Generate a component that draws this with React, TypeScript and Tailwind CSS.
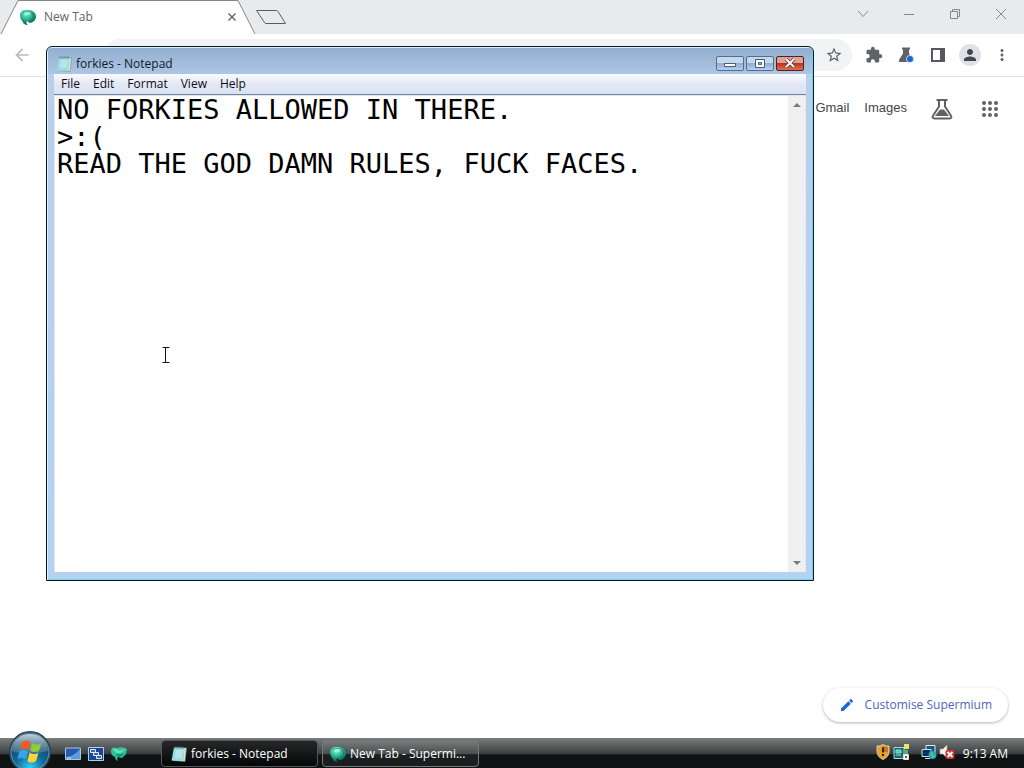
import { useState } from "react";
import type { ReactNode } from "react";
import { MdArrowBack, MdEdit, MdExtension, MdMoreVert, MdPerson, MdStarBorder } from "react-icons/md";

function Supermium({ className }: { className: string }) {
  return (
    <svg viewBox="0 0 16 16" className={className} aria-hidden="true">
      <defs>
        <radialGradient id="gem" cx="40%" cy="25%" r="75%">
          <stop offset="0" stopColor="#8cf3d5" />
          <stop offset="0.5" stopColor="#2bb594" />
          <stop offset="1" stopColor="#075a55" />
        </radialGradient>
      </defs>
      <path d="M0 5C1 1 5 0 9 1c4 0 7 3 7 6.500C16 11 13 14 9.500 14L7 12l-.5 2.500L8 16c-3 0-5-1.500-5.500-3.500C.5 11 0 8 0 5Z" fill="url(#gem)" />
      <path d="M3 4c3-2 8-2 10 1 1.500 3-.5 6-4 7" fill="none" stroke="#0a6b66" strokeWidth="1" opacity=".6" />
      <path d="M4 4c2-2 6-1.500 7 0-1 2-5 3-7 2Z" fill="#b1fae5" opacity=".65" />
    </svg>
  );
}

function SupermiumPinned() {
  return (
    <svg viewBox="0 0 16 16" className="size-4" aria-hidden="true">
      <path d="M0 5C0 1 3 1 6 2c3-1.500 7-1 10 1l-1 5-4 4-4-1-1 2 1 2c-2-1-3-2-3-4C1 10 0 8 0 5Z" fill="#2cc197" />
      <path d="M1.500 3c2-1 5 0 7 1.500 2-1 4-1.500 6-1.500l-4 4H5Z" fill="#78dfbf" opacity=".8" />
      <path d="M5 8c3 1 6 0 8-1-1 3-4 4.500-7 3.500Z" fill="#139273" />
    </svg>
  );
}

function NoteIcon({ className }: { className: string }) {
  return (
    <svg viewBox="0 0 16 16" className={className} aria-hidden="true">
      <path d="m4 1.500 11.500.5-1.500 13.500-12-1Z" fill="#eee9cb" stroke="#77896f" strokeWidth=".6" />
      <path d="m3 1.500 11 .5-1.500 13L.5 14.500Z" fill="#9bdce0" />
      <path d="M5 5h7M4.500 7h7M4 9h7M4 11h7" stroke="#d9f6f5" strokeWidth=".8" />
      <path d="M4 .5v2m2-2v2m2-2v2m2-2v2m2-2v2" stroke="#41717c" strokeWidth=".9" />
    </svg>
  );
}

function FlaskSmall() {
  return (
    <svg viewBox="0 0 18 18" className="size-[18px]" aria-hidden="true">
      <path d="M5 1.500h8v2h-1v4L16 14c.7 1.200 0 2-1 2H3c-1 0-1.700-.8-1-2l4-6.500v-4H5Z" fill="#5f6368" />
      <circle cx="13" cy="13" r="3.600" fill="#1a66d8" stroke="#fff" strokeWidth=".7" />
    </svg>
  );
}

function FlaskLarge() {
  return (
    <svg viewBox="0 0 24 24" className="size-6" aria-hidden="true" fill="none" stroke="#5f6368" strokeWidth="2">
      <path d="M6.500 3h11M9 3v6.500L3.500 18C2 20 2.500 21.500 4.500 21.500h15c2 0 2.500-1.500 1-3.500L15 9.500V3" />
      <path d="M10 12.500h4l5 6.500H5Z" fill="#5f6368" stroke="none" />
    </svg>
  );
}

function AppsGrid() {
  const spots = [6, 12, 18];
  return (
    <svg viewBox="0 0 24 24" className="size-6" fill="currentColor" aria-hidden="true">
      {spots.map((y) => spots.map((x) => <circle key={`${x}-${y}`} cx={x} cy={y} r="2" />))}
    </svg>
  );
}

function CaptionButton({ label, children }: { label: string; children: ReactNode }) {
  return (
    <button aria-label={label} className="flex h-7 w-[46px] items-center justify-center">
      <svg viewBox="0 0 12 12" className="size-3" fill="none" stroke="#85878c" strokeWidth="1">{children}</svg>
    </button>
  );
}

function ToolButton({ label, children }: { label: string; children: ReactNode }) {
  return <button aria-label={label} className="flex size-8 items-center justify-center text-[#5f6368]">{children}</button>;
}

function Browser() {
  return (
    <main className="flex flex-1 flex-col bg-white">
      <header className="flex h-[34px] items-start bg-[#e8eaed]">
        <div className="relative flex h-[34px] w-[256px] shrink-0 items-center pl-5 pr-4">
          <svg viewBox="0 0 256 34" className="absolute inset-0 size-full" aria-hidden="true">
            <path d="M1 34 18 .5h220L255 34" fill="#fff" stroke="#85878b" />
          </svg>
          <Supermium className="relative size-4" />
          <span className="relative ml-2 flex-1 text-[12px] leading-4 text-[#606369]">New Tab</span>
          <button aria-label="Close tab" className="relative flex size-4 items-center justify-center">
            <svg viewBox="0 0 8 8" className="size-2" stroke="#5f6368" strokeWidth="1.400"><path d="m.5.5 7 7m0-7-7 7" /></svg>
          </button>
        </div>
        <button aria-label="New tab" className="flex h-[34px] items-center">
          <svg viewBox="0 0 32 16" className="h-4 w-8" fill="none" stroke="#5b5d60"><path d="M.5 1.500h20q1 0 1.500 1l7.500 12H10q-1 0-1.500-1Z" /></svg>
        </button>
        <div className="ml-auto flex">
          <CaptionButton label="Search tabs"><path d="m1 3 5 5.500L11 3" /></CaptionButton>
          <CaptionButton label="Minimize"><path d="M1 6.500h10" /></CaptionButton>
          <CaptionButton label="Restore"><path d="M1.500 3.500h7v7h-7ZM3.500 3V1.500h7v7H9" /></CaptionButton>
          <CaptionButton label="Close"><path d="m1 1 10 10m0-10L1 11" /></CaptionButton>
        </div>
      </header>
      <nav className="flex h-[43px] items-center border-b border-[#dfe1e5] pl-3 pr-1.5">
        <button aria-label="Back" className="text-[#babcbe]"><MdArrowBack size={20} /></button>
        <div className="ml-[72px] mr-1.5 flex h-8 flex-1 items-center justify-end rounded-full bg-[#f1f3f4] pr-[9px]">
          <button aria-label="Bookmark" className="text-[#5f6368]"><MdStarBorder size={18} /></button>
        </div>
        <ToolButton label="Extensions"><MdExtension size={18} /></ToolButton>
        <ToolButton label="Experiments"><FlaskSmall /></ToolButton>
        <ToolButton label="Side panel">
          <svg viewBox="0 0 14 14" className="size-3.5"><path d="M0 0h14v14H0Z" fill="#55585c" /><path d="M2 2h7v10H2Z" fill="#fff" /></svg>
        </ToolButton>
        <ToolButton label="Profile"><span className="flex size-[22px] items-center justify-center rounded-full bg-[#dee1e6] text-[#42474e]"><MdPerson size={18} /></span></ToolButton>
        <ToolButton label="Menu"><MdMoreVert size={18} /></ToolButton>
      </nav>
      <div className="flex h-16 items-center justify-end pr-[22px] font-['Liberation_Sans',sans-serif] text-[13px] text-[#434548]">
        <a href="#gmail" className="mr-[15px] pb-0.5">Gmail</a>
        <a href="#images" className="mr-[23px] pb-0.5">Images</a>
        <button aria-label="Search labs" className="mr-6"><FlaskLarge /></button>
        <button aria-label="Google apps" className="text-[#5f6368]"><AppsGrid /></button>
      </div>
      <div className="mt-auto flex justify-end pb-4 pr-4">
        <button className="flex h-[34px] items-center gap-2.5 rounded-full bg-white px-4 text-[12px] text-[#4c66b9] shadow-[0_1px_3px_rgba(0,0,0,0.3)]">
          <MdEdit size={16} className="text-[#1967d2]" />Customise Supermium
        </button>
      </div>
    </main>
  );
}

function Notepad() {
  const [text, setText] = useState("NO FORKIES ALLOWED IN THERE.\n>:(\nREAD THE GOD DAMN RULES, FUCK FACES.");
  return (
    <section aria-label="forkies - Notepad" className="absolute left-[46px] top-[46px] flex h-[535px] w-[768px] flex-col rounded-t-md border border-[#061a20] bg-linear-to-b from-[#b9cfe9] to-[#b5d2f2] px-[7px] pb-2 text-[#111a2c] shadow-[inset_1px_1px_0_#d8f2fb,inset_-1px_-1px_0_#69d7ef]">
      <header className="-mx-1.5 mt-px flex h-[26px] shrink-0 items-center rounded-t bg-linear-to-b from-[#91afd1] via-[#a1bad9] to-[#acc6e5] px-2 pt-1.5">
        <NoteIcon className="mr-1 size-4" />
        <h1 className="flex-1 text-[12px] leading-4">forkies - Notepad</h1>
        <div className="flex gap-0.5 pb-0.5">
          <button aria-label="Minimize" className="flex h-[15px] w-7 items-center justify-center rounded-xs border border-[#576d8b] bg-linear-to-b from-[#c5d9ed] from-45% via-[#91add0] via-50% to-[#b3d0ec]">
            <svg viewBox="0 0 12 9" className="h-[9px] w-3"><path d="M.5 4.500h11v3H.5Z" fill="#fff" stroke="#485b78" /></svg>
          </button>
          <button aria-label="Maximize" className="flex h-[15px] w-7 items-center justify-center rounded-xs border border-[#576d8b] bg-linear-to-b from-[#c5d9ed] from-45% via-[#91add0] via-50% to-[#b3d0ec]">
            <svg viewBox="0 0 12 9" className="h-[9px] w-3"><path d="M1.500.5h9v8h-9Z" fill="#fff" stroke="#485b78" /><path d="M4.500 3.500h3v2h-3Z" fill="#9bb5d4" stroke="#485b78" /></svg>
          </button>
          <button aria-label="Close" className="flex h-[15px] w-7 items-center justify-center rounded-xs border border-[#551e20] bg-linear-to-b from-[#dfa096] from-45% via-[#b93620] via-50% to-[#da704d]">
            <svg viewBox="0 0 12 10" className="h-2.5 w-3"><path d="m2 1 8 8m0-8L2 9" stroke="#5c3036" strokeWidth="3.500" /><path d="m2 1 8 8m0-8L2 9" stroke="#fff" strokeWidth="2" /></svg>
          </button>
        </div>
      </header>
      <nav className="flex h-[21px] shrink-0 items-center gap-[13px] border-b border-[#74839f] bg-linear-to-b from-[#fafbff] via-[#e4e8f5] to-[#d9e2f1] pl-[7px] text-[12px] leading-4 text-[#0d0d14]">
        <button>File</button><button>Edit</button><button>Format</button><button>View</button><button>Help</button>
      </nav>
      <div className="flex min-h-0 flex-1 border-x border-t border-[#dce9f5] bg-white">
        <textarea aria-label="Document" spellCheck={false} value={text} onChange={(e) => setText(e.target.value)} className="min-w-0 flex-1 resize-none overflow-hidden bg-white px-0.5 font-['DejaVu_Sans_Mono',monospace] text-[27px] leading-[27px] text-black outline-none" />
        <div className="flex w-[17px] flex-col items-center justify-between bg-[#eff0f1] py-[7px]">
          <button aria-label="Scroll up" className="flex"><svg viewBox="0 0 8 4" className="h-1 w-2"><path d="m4 0 4 4H0Z" fill="#777b80" /></svg></button>
          <button aria-label="Scroll down" className="flex"><svg viewBox="0 0 8 4" className="h-1 w-2"><path d="M0 0h8L4 4Z" fill="#777b80" /></svg></button>
        </div>
      </div>
    </section>
  );
}

function StartOrb() {
  return (
    <svg viewBox="0 0 44 44" className="size-11" aria-hidden="true">
      <defs>
        <radialGradient id="orb" cx="50%" cy="90%" r="80%"><stop offset="0" stopColor="#31d1f4" /><stop offset=".45" stopColor="#126a9b" /><stop offset="1" stopColor="#143b59" /></radialGradient>
        <linearGradient id="shine" x2="0" y2="1"><stop stopColor="#d9e6ed" stopOpacity=".9" /><stop offset="1" stopColor="#7697aa" stopOpacity=".35" /></linearGradient>
      </defs>
      <circle cx="22" cy="22" r="20" fill="url(#orb)" stroke="#244351" strokeWidth="2" />
      <circle cx="22" cy="22" r="19" fill="none" stroke="#92b8c7" strokeWidth=".7" />
      <path d="M4 21C4 10 12 4 22 4s18 6 18 17c-10 3-25 4-36 0Z" fill="url(#shine)" />
      <path d="M14 12c3-2 6-2 8.500 0l-2 8c-3-2-6-2-8.500-.5Z" fill="#f15a24" />
      <path d="M24 13c3 2 6 2 9.500 0l-2.500 8c-3 1.500-6 1.500-9-.5Z" fill="#91ca38" />
      <path d="M11.500 21c3-2 6-1.500 8.500.5l-2 8c-3-2-6-2-8.500-.5Z" fill="#35a5e5" />
      <path d="M21.500 22.500c3 2 6 2 9 .5l-2.500 8c-3 2-6 2-8.500 0Z" fill="#ffd438" />
    </svg>
  );
}

function Taskbar() {
  return (
    <footer className="flex h-[30px] shrink-0 items-center border-t border-[#7a7d7e] bg-linear-to-b from-[#747879] via-[#3c4041] via-50% to-[#101314] to-55% pr-4 text-[12px] leading-4 text-white">
      <button aria-label="Start" className="-mb-2 -mt-3 ml-2 shrink-0"><StartOrb /></button>
      <div className="ml-[13px] flex items-center gap-[7px]">
        <button aria-label="Show desktop"><svg viewBox="0 0 16 14" className="h-3.5 w-4"><path d="M.5 1h15v11.500H.5Z" fill="#285bb0" stroke="#adc5d9" /><path d="M1 10Q8 10 15 2v10H1Z" fill="#5b9bdc" /><path d="M2 11h4" stroke="#d9eff9" /></svg></button>
        <button aria-label="Switch between windows"><svg viewBox="0 0 16 14" className="h-3.5 w-4"><path d="M.5.5h15v13H.5Z" fill="#1a4795" stroke="#b5cbe5" /><path d="M2.500 2.500h5v3h-5Zm3 3h5v3h-5Zm3 3h5v3h-5Z" fill="#316aad" stroke="#e2ebf4" /></svg></button>
        <button aria-label="Supermium"><SupermiumPinned /></button>
      </div>
      <div className="ml-[34px] flex gap-1">
        <button className="flex h-[27px] w-[157px] items-center gap-1 rounded-sm border border-[#555] bg-linear-to-b from-[#262829] to-[#050607] px-[9px]"><NoteIcon className="size-4 shrink-0" /><span>forkies - Notepad</span></button>
        <button className="flex h-[27px] w-[157px] items-center gap-1 rounded-sm border border-[#777a7b] bg-linear-to-b from-[#777b7c] via-[#4b4f50] via-50% to-[#1b1e1f] to-55% px-[7px]"><Supermium className="size-4 shrink-0" /><span>New Tab - Supermi...</span></button>
      </div>
      <div className="ml-auto flex items-center">
        <div className="mr-2 flex items-center pb-1">
          <svg viewBox="0 0 16 16" className="mr-0.5 size-4" role="img" aria-label="Security alert"><path d="M8 .5q3 2 6 1.500v5q0 6-6 8.500Q2 13 2 7V2q3 .5 6-1.500Z" fill="#e9a02b" stroke="#d5cdb9" /><path d="M8 1.500q2 1.500 5 1.500v5H8Z" fill="#c77619" /><path d="M8 3.500v5M8 10v2" stroke="#2b2110" strokeWidth="2" /></svg>
          <svg viewBox="0 0 16 16" className="mr-3 size-4" role="img" aria-label="Virtual machine"><path d="M1 3.500h10v11H1Z" fill="#16696c" stroke="#9cddd7" /><path d="M3 6h5v3H3Zm0 5h5" fill="#4fc6ba" stroke="#8eddd4" /><path d="M11 0h5v5h-5Z" fill="#e9e36d" /><path d="M10 6h5v4h-5Z" fill="#59a783" /><path d="M10.500 10.500h5v5h-5Z" fill="#fff" stroke="#ddd" /><path d="M12 12h2v2h-2Z" fill="#c43429" /></svg>
          <svg viewBox="0 0 16 16" className="mr-0.5 size-4" role="img" aria-label="Network"><path d="M5 1.500h9v8H5Z" fill="#175783" stroke="#d9edfa" /><path d="M1 5.500h9v7H1Z" fill="#093458" stroke="#c6dfed" /><path d="M4 14.500h5" stroke="#c6dfed" /><circle cx="11.500" cy="11" r="4" fill="#239ee0" /><path d="m9 9 3-1v3l3 1-3 2-2-2Z" fill="#60c84a" /></svg>
          <svg viewBox="0 0 16 16" className="size-4" role="img" aria-label="Muted"><path d="M1 5h3l4-4v13l-4-4H1Z" fill="#f3f3f3" stroke="#aaa" strokeWidth=".6" /><rect x="6.500" y="6" width="9" height="9" rx="2" fill="#d72f2c" /><path d="m8.500 8 5 5m0-5-5 5" stroke="#fff" strokeWidth="1.800" /></svg>
        </div>
        <time>9:13 AM</time>
      </div>
    </footer>
  );
}

export default function App() {
  return (
    <div className="relative flex min-h-screen flex-col overflow-hidden bg-white font-['Open_Sans',sans-serif]">
      <Browser />
      <Notepad />
      <Taskbar />
      <svg viewBox="0 0 8 16" className="pointer-events-none absolute left-[162px] top-[347px] h-4 w-2" fill="none" stroke="#111" aria-hidden="true"><path d="M.5.5h7M3.500 1v14M.5 15.500h7" /></svg>
    </div>
  );
}
